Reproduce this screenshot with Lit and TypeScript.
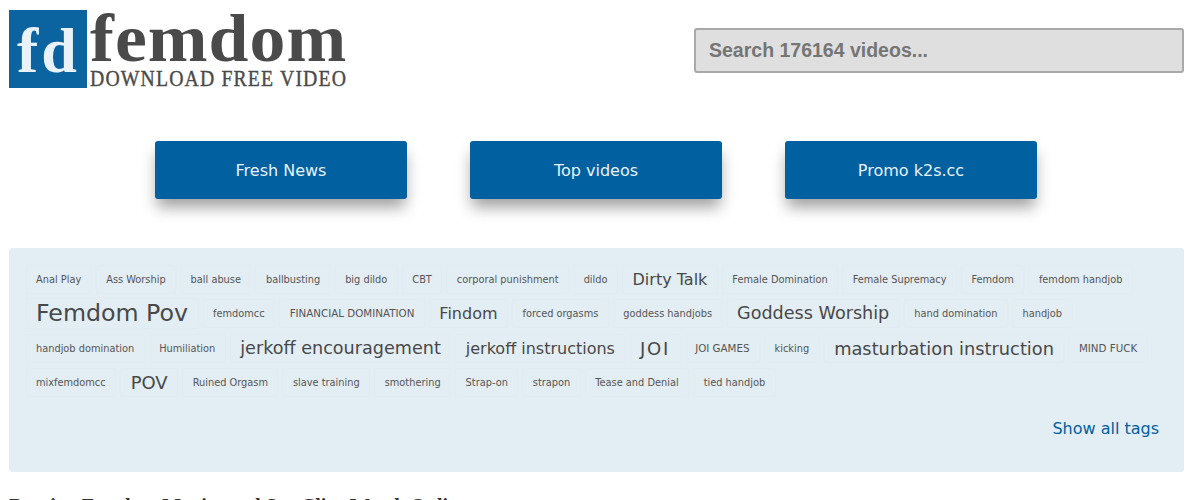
import { LitElement, html, css } from "lit";
import { customElement } from "lit/decorators.js";

type Tag = [string, number, boolean?];
const S = 9.8;
const U = 10.3;
const TAGS: Tag[] = [
  ["Anal Play", S], ["Ass Worship", S], ["ball abuse", S], ["ballbusting", S], ["big dildo", S], ["CBT", S],
  ["corporal punishment", S], ["dildo", S], ["Dirty Talk", 16], ["Female Domination", S], ["Female Supremacy", S],
  ["Femdom", S], ["femdom handjob", S],
  ["Femdom Pov", 23.7], ["femdomcc", S], ["FINANCIAL DOMINATION", U], ["Findom", 16], ["forced orgasms", S],
  ["goddess handjobs", S], ["Goddess Worship", 17.6], ["hand domination", S], ["handjob", S],
  ["handjob domination", S], ["Humiliation", S], ["jerkoff encouragement", 17.6], ["jerkoff instructions", 16], ["JOI", 18, true],
  ["JOI GAMES", U], ["kicking", S], ["masturbation instruction", 17.8], ["MIND FUCK", U],
  ["mixfemdomcc", S], ["POV", 18], ["Ruined Orgasm", S], ["slave training", S], ["smothering", S], ["Strap-on", S],
  ["strapon", S], ["Tease and Denial", S], ["tied handjob", S],
];

@customElement("app-root")
export class AppRoot extends LitElement {
  static styles = css`
    :host { display: block; height: 500px; overflow: hidden; background: #fff; font-family: "DejaVu Sans", Verdana, sans-serif; color: #444; }
    .wrap { padding: 10px 16px 0 9px; }
    .header { display: flex; justify-content: space-between; align-items: flex-start; height: 78px; }
    .logo { display: flex; gap: 3px; }
    .mark { width: 78px; height: 78px; background: #0b64a0; color: #e8f2f8; display: flex; align-items: center; justify-content: center; font: 700 64px/64px "Liberation Serif", serif; padding: 3px 0 0 1px; box-sizing: border-box; letter-spacing: 3px; }
    .words { display: flex; flex-direction: column; width: 256px; }
    .femdom { font: 700 67px/56px "Liberation Serif", serif; color: #4a4a4a; letter-spacing: 1px; height: 57px; white-space: nowrap; transform: scaleX(1.07); transform-origin: left; }
    .sub { font: 400 24px/22px "Liberation Serif", serif; color: #4a4a4a; white-space: nowrap; transform: scaleX(.822); transform-origin: left; -webkit-text-stroke: .4px #4a4a4a; letter-spacing: 1.4px; }
    .search { margin-top: 18px; width: 490px; height: 45px; box-sizing: border-box; background: #dfdfdf; border: 2px solid #a9a9a9; border-radius: 3px; padding-left: 13px; font: 700 19.5px/40px "Liberation Sans", Arial, sans-serif; color: #757575; }
    .nav { display: flex; justify-content: center; gap: 63.5px; margin: 53px 1px 0 0; }
    .btn { width: 251.5px; height: 58px; background: #0060a0; color: #e8f2f8; border-radius: 3px; display: flex; align-items: center; justify-content: center; font-size: 16px; box-shadow: 0 10px 15px -2px rgba(0,0,0,.38); }
    .panel { margin-top: 49px; height: 224px; box-sizing: border-box; background: #e3edf4; border-radius: 3px; padding: 16.5px 17px 0 16.5px; display: flex; flex-direction: column; }
    .tags { display: flex; flex-wrap: wrap; align-items: center; gap: 4.8px 4px; }
    .tag { padding: 6px 9.5px; border: 1px solid #e1ebf2; border-radius: 3px; line-height: 15px; color: #555; white-space: nowrap; }
    .tag.mid { color: #484848; }
    .tag.xl { line-height: 17px; color: #484848; }
    .tag.wide { letter-spacing: 1.8px; }
    .more { align-self: flex-end; margin: 22px 8px 0 0; font-size: 16px; color: #0060a0; }
    .title { margin: 23px 0 0; font: 700 20px/22px "Liberation Serif", serif; color: #333; white-space: nowrap; }
  `;

  render() {
    return html`<div class="wrap">
      <div class="header">
        <div class="logo">
          <div class="mark">fd</div>
          <div class="words"><div class="femdom">femdom</div><div class="sub">DOWNLOAD FREE VIDEO</div></div>
        </div>
        <div class="search">Search 176164 videos...</div>
      </div>
      <div class="nav">
        <div class="btn">Fresh News</div><div class="btn">Top videos</div><div class="btn">Promo k2s.cc</div>
      </div>
      <div class="panel">
        <div class="tags">
          ${TAGS.map(([t, s, w]) => html`<span class="tag ${s > 20 ? "xl" : s > 12 ? "mid" : ""} ${w ? "wide" : ""}" style="font-size:${s}px">${t}</span>`)}
        </div>
        <div class="more">Show all tags</div>
      </div>
      <div class="title">Russian Femdom Movies and Sex Clips Watch Online</div>
    </div>`;
  }
}
